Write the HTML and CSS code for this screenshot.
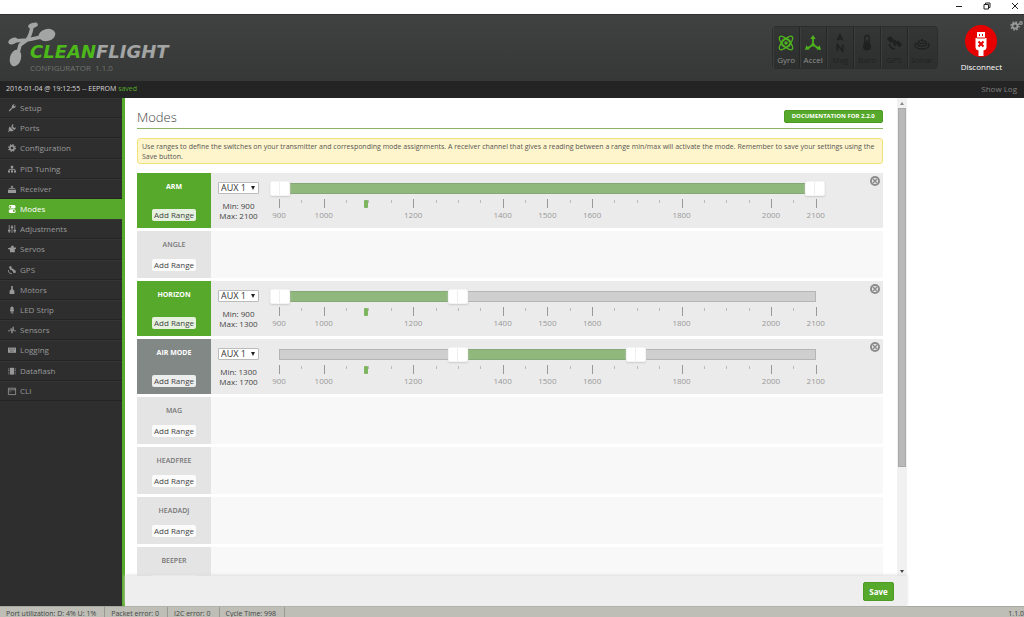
FILE: index.html
```html
<!DOCTYPE html>
<html lang="en">
<head>
<meta charset="utf-8">
<meta name="viewport" content="width=device-width, initial-scale=1">
<title>Cleanflight Configurator</title>
<link rel="stylesheet" href="styles.css">
</head>
<body>
<div class="titlebar">
  <button class="win-btn" aria-label="Minimize"><svg viewBox="0 0 8 8"><path d="M1 4.5h6"/></svg></button>
  <button class="win-btn" aria-label="Restore"><svg viewBox="0 0 8 8"><path d="M1 2.5h4.5v4.5H1zM2.5 2.500V1H7v4.500H5.500"/></svg></button>
  <button class="win-btn" aria-label="Close"><svg viewBox="0 0 8 8"><path d="M1 1l6 6M7 1l-6 6"/></svg></button>
</div>

<header class="header">
  <div class="logo">
    <svg class="logo-mark" viewBox="0 0 50 46">
      <path d="M24 3Q23 12 19 17L5 18M19 17L12 22 9 34M19 17L38 13" fill="none" stroke="currentColor" stroke-width="3.500" stroke-linejoin="round"/>
      <ellipse cx="25" cy="2.500" rx="5" ry="2.500" transform="rotate(-18 25 2.500)"/>
      <ellipse cx="5" cy="18" rx="5" ry="3" transform="rotate(-25 5 18)"/>
      <ellipse cx="39" cy="12" rx="8.500" ry="6" transform="rotate(-14 39 12)"/>
      <ellipse cx="7.500" cy="35" rx="5.500" ry="8.500" transform="rotate(16 7.500 35)"/>
    </svg>
    <div class="logo-text">
      <div class="logo-name"><span class="logo-clean">CLEAN</span>FLIGHT</div>
      <div class="logo-sub">CONFIGURATOR&nbsp; 1.1.0</div>
    </div>
  </div>
  <ul class="sensors">
    <li class="sensor on"><svg viewBox="0 0 18 18"><g fill="none" stroke="currentColor" stroke-width="1.500"><ellipse cx="9" cy="9" rx="10" ry="4" transform="rotate(45 9 9)"/><ellipse cx="9" cy="9" rx="10" ry="4" transform="rotate(-45 9 9)"/><circle cx="9" cy="9" r="5"/></g><circle cx="9" cy="9" r="2"/></svg>Gyro</li>
    <li class="sensor on"><svg viewBox="0 0 18 18"><path d="M9 3v8M9 11l-6 4M9 11l6 4" fill="none" stroke="currentColor" stroke-width="2"/><path d="M9 0l3 4.500H6zM0 17l1.500-5.500 4 4.500zM18 17l-5.500-1 4-4.500z"/><circle cx="9" cy="11" r="2"/></svg>Accel</li>
    <li class="sensor"><svg viewBox="0 0 18 18"><path d="M6 6l3-6 3 6M7 4.500h4M6 18v-7l6 7v-7" fill="none" stroke="currentColor" stroke-width="1.800"/></svg>Mag</li>
    <li class="sensor"><svg viewBox="0 0 18 18"><path d="M6.500 10V3a2.500 2.500 0 0 1 5 0v7" fill="none" stroke="currentColor" stroke-width="1.500"/><circle cx="9" cy="13" r="4.500"/><path d="M8 6h2v5H8z"/></svg>Baro</li>
    <li class="sensor"><svg viewBox="0 0 18 18"><path d="M1 4l4-3 4 5-4 3zM11 9l3-3 4 5-3 3zM7 8l3-3 4 4-4 4zM3 10a7 7 0 0 0 7 7v-2a5 5 0 0 1-5-5z"/></svg>GPS</li>
    <li class="sensor"><svg viewBox="0 0 18 18"><g fill="none" stroke="currentColor" stroke-width="1.500"><path d="M2 9C-4 18 22 18 16 9M4 8c-3 6 13 6 10 0"/><path d="M6 6c-3 5 9 5 6 0"/></g><circle cx="9" cy="6" r="1.500"/></svg>Sonar</li>
  </ul>
  <button class="connect">
    <svg viewBox="0 0 32 32"><circle cx="16" cy="16" r="16" fill="#e60000"/><path d="M12 7h8v6h1.500v9q0 3-3 3.500V31h-5v-5.500q-3-.5-3-3.500v-9H12z" fill="#fff"/><path d="M12 13h8M14.500 9v2M17.500 9v2" stroke="#e60000" stroke-width="1"/><path d="M13.500 16.500l5 5M18.500 16.500l-5 5" stroke="#e60000" stroke-width="2"/></svg>
    Disconnect
  </button>
  <button class="options" aria-label="Options"><svg viewBox="0 0 14 12"><circle cx="5" cy="6" r="2.500" fill="none" stroke="currentColor" stroke-width="1.800"/><circle cx="5" cy="6" r="4" fill="none" stroke="currentColor" stroke-width="1.500" stroke-dasharray="1.600 1.540"/><circle cx="11" cy="3" r="1.300" fill="none" stroke="currentColor" stroke-width="1.200"/></svg></button>
</header>

<div class="logbar">
  <span class="log-entry">2016-01-04 @ 19:12:55 -- EEPROM <span class="saved">saved</span></span>
  <a class="showlog" href="#">Show Log</a>
</div>

<div class="main">
  <nav class="sidebar">
    <ul class="nav">
      <li><a href="#"><svg viewBox="0 0 10 10"><path d="M1 8l4-4a2.700 2.700 0 0 1 3.500-3.500L7 2l1 1 1.500-1.500A2.700 2.700 0 0 1 6 5L2 9.500z"/></svg>Setup</a></li>
      <li><a href="#"><svg viewBox="0 0 10 10"><path d="M2 3l5 5q-3 2-4.500.5L1 10 0 9l1.500-1.500Q0 6 2 3zM4 3l2-3 1 1-1.500 3zM7 6l2.500-2 .5 1-2 2.500zM4 4l3 3 1-2-2-2z"/></svg>Ports</a></li>
      <li><a href="#"><svg viewBox="0 0 10 10"><circle cx="5" cy="5" r="2.700" fill="none" stroke="currentColor" stroke-width="2"/><circle cx="5" cy="5" r="4.200" fill="none" stroke="currentColor" stroke-width="1.500" stroke-dasharray="1.700 1.600"/></svg>Configuration</a></li>
      <li><a href="#"><svg viewBox="0 0 10 10"><path d="M3.500 1h3v3h-3zM0 7h2.500v2.500H0zM3.700 7h2.600v2.500H3.700zM7.500 7H10v2.500H7.500z"/><path d="M5 3v4M1.300 7V5.500h7.400V7" fill="none" stroke="currentColor"/></svg>PID Tuning</a></li>
      <li><a href="#"><svg viewBox="0 0 10 10"><path d="M1 4h8v1H1zM0 6h10v4H0zM4.500 1h1v4h-1zM3.500 1.500h3v1.500h-3z"/></svg>Receiver</a></li>
      <li><a href="#" class="active" aria-current="page"><svg viewBox="0 0 10 10"><rect x="1" y="0" width="8.500" height="4.500" rx="2"/><rect x="1" y="5.300" width="8.500" height="4.700" rx="2"/><circle cx="3" cy="2.300" r="1.200" fill="#57a92b"/><circle cx="7.300" cy="7.600" r="1.200" fill="#57a92b"/></svg>Modes</a></li>
      <li><a href="#"><svg viewBox="0 0 10 10"><path d="M1.500 0v10M5 0v10M8.500 0v10" stroke="currentColor"/><path d="M0 6h3v2H0zM3.500 2h3v2h-3zM7 6h3v2H7z"/></svg>Adjustments</a></li>
      <li><a href="#"><svg viewBox="0 0 10 10"><path d="M4 1h3v2h3v2H8.500v4h-6V6L0 5V4l3-1h1z"/></svg>Servos</a></li>
      <li><a href="#"><svg viewBox="0 0 10 10"><path d="M1 1l3-1 1 4-2 1zM4 4l2-1 2 2-2 2zM6 6l3-1 1 3-3 1zM1 5q0 4 4 4v1Q0 10 0 5z"/></svg>GPS</a></li>
      <li><a href="#"><svg viewBox="0 0 10 10"><path d="M4 0h2v4l2 2v4H2V6l2-2z"/></svg>Motors</a></li>
      <li><a href="#"><svg viewBox="0 0 10 10"><path d="M3 5V2.500a2 2 0 0 1 4 0V5h.5v1.500h-1V10h-1V6.500h-1V9h-1V6.500h-1V5z"/></svg>LED Strip</a></li>
      <li><a href="#"><svg viewBox="0 0 10 10"><path d="M0 6h2.500L4 3l1 6 1.500-8L7 6h3" fill="none" stroke="currentColor"/></svg>Sensors</a></li>
      <li><a href="#"><svg viewBox="0 0 10 10"><path d="M0 2h10v6.500H0z"/><path d="M1.500 4h7M2.500 6.500h5" stroke="#2e2e2e" stroke-width=".7" stroke-dasharray="1 .5"/></svg>Logging</a></li>
      <li><a href="#"><svg viewBox="0 0 10 10"><path d="M2.500 1h5v8.500h-5z"/><path d="M1 2v7M9 2v7" stroke="currentColor" stroke-width="1.500" stroke-dasharray="1 1"/></svg>Dataflash</a></li>
      <li><a href="#"><svg viewBox="0 0 10 10"><path d="M.5 1.500h9v8h-9zM.5 3.500h9M2 6h1.500" fill="none" stroke="currentColor"/></svg>CLI</a></li>
    </ul>
  </nav>

  <main class="tab">
    <div class="scroller">
      <div class="content">
        <div class="title-row">
          <h1>Modes</h1>
          <a class="doc-btn" href="#">DOCUMENTATION FOR 2.2.0</a>
        </div>
        <p class="note">Use ranges to define the switches on your transmitter and corresponding mode assignments. A receiver channel that gives a reading between a range min/max will activate the mode. Remember to save your settings using the Save button.</p>
        <div class="modes">
          <section class="mode on" data-min="900" data-max="2100"><div class="mode-head"><h2>ARM</h2><button>Add Range</button></div><div class="mode-body"></div></section>
          <section class="mode"><div class="mode-head"><h2>ANGLE</h2><button>Add Range</button></div><div class="mode-body"></div></section>
          <section class="mode on" data-min="900" data-max="1300"><div class="mode-head"><h2>HORIZON</h2><button>Add Range</button></div><div class="mode-body"></div></section>
          <section class="mode off" data-min="1300" data-max="1700"><div class="mode-head"><h2>AIR MODE</h2><button>Add Range</button></div><div class="mode-body"></div></section>
          <section class="mode"><div class="mode-head"><h2>MAG</h2><button>Add Range</button></div><div class="mode-body"></div></section>
          <section class="mode"><div class="mode-head"><h2>HEADFREE</h2><button>Add Range</button></div><div class="mode-body"></div></section>
          <section class="mode"><div class="mode-head"><h2>HEADADJ</h2><button>Add Range</button></div><div class="mode-body"></div></section>
          <section class="mode"><div class="mode-head"><h2>BEEPER</h2><button aria-label="Add Range"></button></div><div class="mode-body"></div></section>
        </div>
      </div>
      <div class="scrollbar"><span class="arrow up"></span><span class="thumb"></span><span class="arrow down"></span></div>
    </div>
    <div class="toolbar"><button class="save">Save</button></div>
  </main>
</div>

<footer class="status">
  <span>Port utilization: D: 4% U: 1%</span>
  <span>Packet error: 0</span>
  <span>I2C error: 0</span>
  <span>Cycle Time: 998</span>
  <span class="version">1.1.0</span>
</footer>
<script src="modes.js"></script>
</body>
</html>
```
FILE: styles.css
```css
* { box-sizing: border-box; }

body {
  margin: 0;
  height: 100vh;
  overflow: hidden;
  display: flex;
  flex-direction: column;
  font-family: "Open Sans", "Noto Sans", sans-serif;
  font-size: 8px;
  line-height: 10px;
  color: #444;
  background: #fff;
}

ul { list-style: none; margin: 0; padding: 0; }
h1, h2, p { margin: 0; font-weight: 400; }
a { text-decoration: none; color: inherit; }
button { font: inherit; color: inherit; border: 0; padding: 0; background: none; }
svg { display: block; fill: currentColor; overflow: visible; }

.titlebar { display: flex; justify-content: flex-end; gap: 20px; padding: 2px 5px 4px 0; }
.win-btn svg { width: 8px; height: 8px; fill: none; stroke: #222; }

.header {
  display: flex;
  align-items: flex-start;
  height: 67px;
  padding-left: 8px;
  background: linear-gradient(#404241, #363837);
  border-top: 1px solid #303231;
}
.logo { display: flex; flex: 1; padding-top: 8px; color: #a3a5a4; }
.logo-mark { width: 50px; height: 46px; }
.logo-text { margin: 18px 0 0 -28px; }
.logo-name { font: italic bold 18px/22px "DejaVu Sans", sans-serif; }
.logo-clean { color: #4cb81a; }
.logo-sub { color: #70726f; line-height: 10px; }

.sensors {
  display: flex;
  margin-top: 11px;
  padding-right: 2px;
  border: 1px solid #2b2d2c;
  border-radius: 4px;
  background: linear-gradient(#343635, #2d2f2e);
}
.sensor {
  display: flex;
  flex-direction: column;
  align-items: center;
  gap: 4px;
  width: 27px;
  height: 41px;
  padding-top: 8px;
  color: #1f2120;
  border-right: 1px solid #252726;
  border-left: 1px solid #3b3d3c;
}
.sensor:last-child { border-right: 0; }
.sensor svg { width: 16px; height: 16px; }
.sensor.on { color: #8f918f; }
.sensor.on svg { color: #4fb31f; }
.connect {
  display: flex;
  flex-direction: column;
  align-items: center;
  gap: 5px;
  margin: 10px 8px 0 23px;
  color: #fff;
}
.connect svg { width: 32px; height: 32px; }
.options { padding-top: 5px; color: #9a9c9b; }
.options svg { width: 14px; height: 12px; }

.logbar {
  display: flex;
  justify-content: space-between;
  padding: 3px 7px 4px 6px;
  background: #242424;
  color: #d8d8d8;
}
.log-entry { font-size: 7px; }
.saved { color: #57a92b; }
.showlog { color: #808080; }

.main { display: grid; grid-template-columns: 125px 20fr 3fr; flex: 1; min-height: 0; }
.sidebar { background: #2e2e2e; border-right: 3px solid #57a92b; color: #999; }
.nav { display: grid; grid-auto-rows: 1fr; height: 303px; }
.nav a {
  display: flex;
  align-items: center;
  gap: 4px;
  height: 100%;
  padding-left: 8px;
  border-bottom: 1px solid #242424;
  border-top: 1px solid #353535;
}
.nav svg { width: 8px; height: 8px; }
.nav a.active { background: #57a92b; border-color: #57a92b; color: #fff; }

.tab { display: flex; flex-direction: column; min-height: 0; }
.scroller { display: flex; flex: 1; min-height: 0; overflow: hidden; }
.content { flex: 1; padding: 8px 14px 0 12px; }

.title-row {
  display: flex;
  justify-content: space-between;
  align-items: center;
  height: 23px;
  border-bottom: 1px solid #8db365;
}
h1 { font-size: 13px; font-weight: 300; line-height: 18px; color: #444; }
.doc-btn {
  padding: 0 7px;
  margin-bottom: 2px;
  border: 1px solid #4d9a25;
  border-radius: 2px;
  background: #57a92b;
  color: #fff;
  font-size: 6px;
  line-height: 11px;
  font-weight: 700;
}
.note {
  margin: 9px 0;
  padding: 3px 4px 1px;
  border: 1px solid #f2e27c;
  border-radius: 3px;
  background: #fff5cc;
  font-size: 7px;
  line-height: 10px;
  color: #555;
}

.modes { display: flex; flex-direction: column; gap: 3px; }
.mode { display: flex; min-height: 47px; }
.mode[data-min] { min-height: 55px; }
.mode-head {
  display: flex;
  flex-direction: column;
  align-items: center;
  justify-content: space-between;
  width: 74px;
  padding: 9px 0 7px;
  background: #e4e4e4;
  color: #777;
}
.mode h2 { font-size: 7px; line-height: 10px; font-weight: 600; }
.mode-head button {
  min-width: 44px;
  min-height: 12px;
  padding: 1px 2px;
  border-radius: 2px;
  background: rgba(255, 255, 255, 0.85);
  color: #444;
}
.mode.on .mode-head { background: #57a92b; color: #fff; }
.mode.off .mode-head { background: #828885; color: #fff; }
.mode.on h2, .mode.off h2 { font-weight: 700; }
.mode-body { display: flex; flex: 1; background: #f8f8f8; padding: 0 3px 0 7px; }
.mode[data-min] .mode-body { background: #ebebeb; }

.channel { width: 41px; padding-top: 9px; text-align: center; }
.select-wrap { display: block; position: relative; margin-bottom: 7px; }
.select-wrap::after {
  content: "";
  position: absolute;
  right: 4px;
  top: 4px;
  border: 2px solid transparent;
  border-top: 4px solid #222;
  border-bottom: 0;
}
.channel select {
  display: block;
  appearance: none;
  width: 100%;
  height: 12px;
  padding: 0 2px;
  border: 1px solid #bbb;
  border-radius: 1px;
  background: #fff;
  color: #333;
  font-family: inherit;
  font-size: 9px;
  line-height: 10px;
}

.slider { position: relative; flex: 1; margin: 10px 54px 0 20px; }
.track { position: relative; height: 11px; background: #cfcfcf; border: 1px solid #b5b5b5; }
.fill { position: absolute; top: -1px; bottom: -1px; background: #90b77c; border: 1px solid #86a777; border-width: 1px 0; }
.handle {
  position: absolute;
  top: -3px;
  width: 20px;
  height: 15px;
  margin-left: -10px;
  border: 1px solid #f4f4f4;
  border-radius: 2px;
  background: linear-gradient(90deg, #fff 8px, #efeff3 8px, #efeff3 9px, #fff 9px);
  box-shadow: 0 1px 2px #ccc;
}
.pips { position: relative; height: 30px; }
.tick { position: absolute; top: 6px; width: 1px; height: 3px; background: #bbb; }
.tick.large { top: 5px; height: 9px; background: #999; }
.pip-label { position: absolute; top: 16px; width: 30px; margin-left: -15px; text-align: center; color: #999; }
.marker { position: absolute; top: 6px; width: 4px; height: 8px; background: #7db560; border-radius: 1px; }
.remove { align-self: flex-start; margin-top: 3px; color: #8c8c8c; }
.remove svg { width: 10px; height: 10px; }

.scrollbar { display: flex; flex-direction: column; width: 10px; padding: 0 1px; background: #f1f1f1; }
.arrow { height: 10px; flex: none; display: flex; align-items: center; justify-content: center; }
.arrow::after { content: ""; border: 2px solid transparent; }
.arrow.up::after { border-bottom: 3px solid #888; border-top: 0; }
.arrow.down { margin-top: auto; }
.arrow.down::after { border-top: 3px solid #444; border-bottom: 0; }
.thumb { height: 75%; background: #b9b9b9; border: 1px solid #a8a8a8; }

.toolbar { position: relative; display: flex; justify-content: flex-end; padding: 6px 13px 5px 0; background: #eee; box-shadow: 0 -1px 3px #ddd; }
.save {
  padding: 4px 5px;
  border: 1px solid #4d9a25;
  border-radius: 2px;
  background: #57a92b;
  color: #fff;
  font-size: 8px;
  line-height: 9px;
  font-weight: 700;
}

.status {
  display: flex;
  height: 11px;
  padding-left: 6px;
  overflow: hidden;
  background: #bebeb6;
  border-top: 1px solid #a9a9a2;
  line-height: 13px;
  color: #444;
  font-size: 7px;
}
.status span { flex: none; padding-right: 8px; margin-right: 6px; border-right: 1px solid #989890; }
.status .version { margin: 0 0 0 auto; padding: 0; border: 0; }
```
FILE: modes.js
```js
const LOW = 900;
const HIGH = 2100;
const LABELLED = [900, 1000, 1200, 1400, 1500, 1600, 1800, 2000, 2100];
const CURRENT = 1090;

const percent = (value) => ((value - LOW) / (HIGH - LOW)) * 100 + "%";

function pips() {
  let html = "";
  for (let value = LOW; value <= HIGH; value += 50) {
    const large = LABELLED.includes(value);
    html += `<span class="tick${large ? " large" : ""}" style="left:${percent(value)}"></span>`;
    if (large) html += `<span class="pip-label" style="left:${percent(value)}">${value}</span>`;
  }
  return html;
}

document.querySelectorAll(".mode[data-min]").forEach((mode) => {
  const min = Number(mode.dataset.min);
  const max = Number(mode.dataset.max);
  mode.querySelector(".mode-body").innerHTML = `
    <div class="channel">
      <label class="select-wrap"><select aria-label="Channel"><option>AUX 1</option></select></label>
      <div>Min: ${min}</div>
      <div>Max: ${max}</div>
    </div>
    <div class="slider">
      <div class="track">
        <div class="fill" style="left:${percent(min)};right:calc(100% - ${percent(max)})"></div>
        <div class="handle" style="left:${percent(min)}"></div>
        <div class="handle" style="left:${percent(max)}"></div>
      </div>
      <div class="pips">${pips()}<span class="marker" style="left:${percent(CURRENT)}"></span></div>
    </div>
    <button class="remove" aria-label="Remove range"><svg viewBox="0 0 10 10"><circle cx="5" cy="5" r="5"/><circle cx="5" cy="5" r="3" fill="#ebebeb"/><path d="M3 3l4 4M7 3l-4 4" stroke="#8c8c8c" stroke-width="1.500"/></svg></button>`;
});
```
